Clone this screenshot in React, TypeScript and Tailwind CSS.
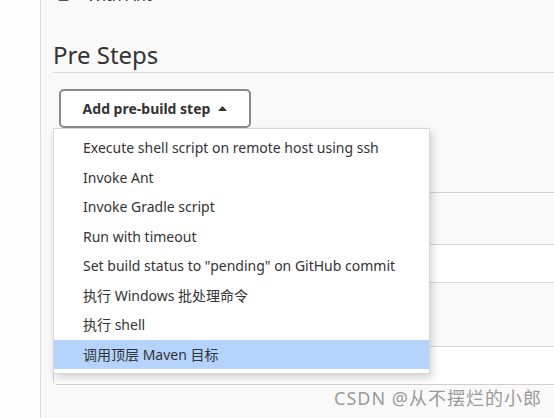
import React from 'react';

const items = [
  'Execute shell script on remote host using ssh',
  'Invoke Ant',
  'Invoke Gradle script',
  'Run with timeout',
  'Set build status to "pending" on GitHub commit',
  '执行 Windows 批处理命令',
  '执行 shell',
  '调用顶层 Maven 目标',
];

export default function App() {
  return (
    <div
      className="w-[554px] h-[418px] overflow-hidden flex bg-white text-[#333]"
      style={{ fontFamily: '"Noto Sans", "Noto Sans CJK SC", sans-serif' }}
    >
      {/* left rail */}
      <div className="w-[41px] shrink-0 bg-[#fdfdfd] border-r border-[#dcdcdc]" />

      {/* main */}
      <div className="flex-1 bg-[#f9f9f9] pl-[12px] relative">
        {/* clipped row above */}
        <div className="flex items-center h-[20px] -mt-[15px] pl-[5px] gap-[18px]">
          <span className="w-[11px] h-[11px] border-2 border-[#555] rounded-[2px]" />
          <span className="text-[16px]">With Ant</span>
        </div>

        {/* Pre Steps */}
        <h2 className="mt-[35px] text-[24px] leading-[30px] pb-[2px] border-b border-[#d9d9d9]">Pre Steps</h2>

        <div className="relative mt-[16px] ml-[6px] w-fit">
          <button className="h-[39px] w-[192px] bg-white border-2 border-[#8a8a8a] rounded-[5px] flex items-center justify-center gap-[8px] text-[14px] font-bold text-[#333]">
            Add pre-build step
            <svg width="9" height="5" viewBox="0 0 9 5"><path d="M0 5 L4.5 0 L9 5 Z" fill="#333" /></svg>
          </button>

          {/* dropdown menu */}
          <div className="absolute z-10 top-[39px] left-[-6px] w-[377px] bg-white border border-[#d6d6d6] shadow-[2px_4px_8px_rgba(0,0,0,0.18)] py-[4px]">
            {items.map((t, i) => (
              <div
                key={t}
                className={`h-[29.5px] flex items-center pl-[29px] text-[14px] whitespace-nowrap ${
                  i === items.length - 1 ? 'bg-[#b4d4fd]' : ''
                }`}
              >
                {t}
              </div>
            ))}
          </div>
        </div>

        {/* section box behind menu */}
        <div className="mt-[64px] mr-[-10px] border border-[#d0d0d0] rounded-[4px] overflow-hidden">
          <div className="h-[52px] bg-[#f9f9f9] border-b border-[#d6d6d6]" />
          <div className="h-[38px] bg-white border-b border-[#d6d6d6]" />
          <div className="h-[64px] bg-[#f9f9f9] border-b border-[#d6d6d6]" />
          <div className="h-[37px] bg-white" />
        </div>

        {/* watermark */}
        <div className="absolute right-[12px] bottom-[6px] text-[18px] text-[#9a9a9a] tracking-[1px]">
          CSDN @从不摆烂的小郎
        </div>
      </div>
    </div>
  );
}
